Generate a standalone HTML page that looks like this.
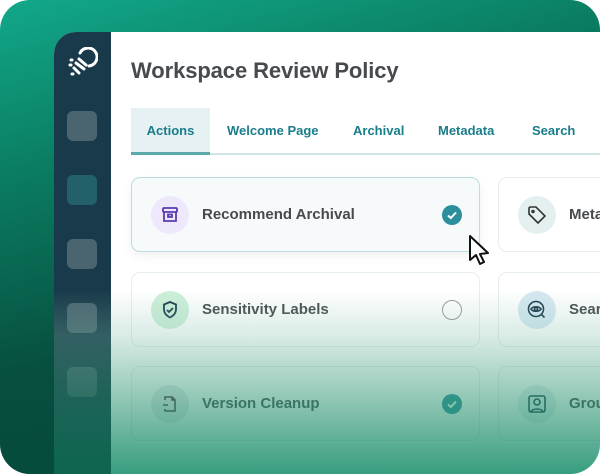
<!DOCTYPE html>
<html><head><style>
*{margin:0;padding:0;box-sizing:border-box}
body{width:600px;height:474px;overflow:hidden;background:#fff;font-family:"Liberation Sans",sans-serif}
.outer{position:absolute;left:0;top:0;width:600px;height:474px;border-radius:30px;overflow:hidden;background:linear-gradient(165deg,#12a88a 0%,#0a7a5e 30%,#075040 60%,#064a3a 100%)}
.panel{position:absolute;left:54px;top:32px;width:560px;height:460px;border-top-left-radius:22px;overflow:hidden;background:#fff}
.side{position:absolute;left:0;top:0;width:57px;height:100%;background:#193a4b}
.sq{position:absolute;left:13px;width:30px;height:30px;border-radius:6px;background:#4a6470}
.content{position:absolute;left:57px;top:0;right:0;bottom:0;background:#fff}
h1{position:absolute;left:20px;top:26px;font-size:22px;font-weight:bold;color:#474a4e;letter-spacing:-.1px}
.tabs{position:absolute;left:20px;top:76px;width:500px;height:47px;border-bottom:2px solid #cfe6e8}
.tab{position:absolute;top:0;height:47px;line-height:46px;font-size:13px;font-weight:bold;color:#1a7d8a}
.tab.act{background:#e6f1f3;border-bottom:3px solid #5aabaa}
.card{position:absolute;height:75px;border:1px solid #e6eeee;border-radius:9px;background:#fff}
.card.sel{background:#f7fafb;border-color:#b9dde2;box-shadow:0 4px 10px rgba(0,0,0,.06)}
.ic{position:absolute;left:19px;top:18px;width:38px;height:38px;border-radius:50%;display:flex;align-items:center;justify-content:center}
.lbl{position:absolute;left:70px;top:28px;font-size:15px;font-weight:bold;color:#474a4e}
.chk{position:absolute;left:310px;top:27px;width:20px;height:20px;border-radius:50%}
.ov{position:absolute;left:54px;top:290px;width:546px;height:184px;background:linear-gradient(180deg,rgba(255,255,255,0) 0%,rgba(130,190,170,.3) 25%,rgba(50,150,118,.55) 60%,rgba(20,140,105,.85) 100%)}
.ovl{position:absolute;left:0;top:300px;width:111px;height:174px;background:linear-gradient(180deg,rgba(6,74,58,0),rgba(6,74,58,.5))}
</style></head><body>
<div class="outer">
<div class="panel">
 <div class="side">
  <svg style="position:absolute;left:12px;top:15px" width="32" height="32" viewBox="0 0 32 32" fill="none" stroke="#fff" stroke-width="3" stroke-linecap="round"><path d="M14 6a9 9 0 1 1 9 13"/><path d="M13 12l7 6M10 16l8 6M8 21l5 5M5 13h1M4 18h1M6 27h1"/></svg>
  <div class="sq" style="top:79px"></div>
  <div class="sq" style="top:143px;background:#24606a"></div>
  <div class="sq" style="top:207px"></div>
  <div class="sq" style="top:271px"></div>
  <div class="sq" style="top:335px"></div>
 </div>
 <div class="content">
  <h1>Workspace Review Policy</h1>
  <div class="tabs">
   <div class="tab act" style="left:0;width:79px;text-align:center">Actions</div>
   <div class="tab" style="left:96px">Welcome Page</div>
   <div class="tab" style="left:222px">Archival</div>
   <div class="tab" style="left:307px">Metadata</div>
   <div class="tab" style="left:401px">Search</div>
  </div>
  <div class="card sel" style="left:20px;top:145px;width:349px">
   <div class="ic" style="background:#ede8fb"><svg width="20" height="20" viewBox="0 0 20 20" fill="none" stroke="#5b3bb0" stroke-width="1.8"><rect x="3" y="3" width="14" height="4" rx="1"/><path d="M4 7v9h12V7"/><rect x="8" y="9.5" width="4" height="2.5"/></svg></div>
   <div class="lbl">Recommend Archival</div>
   <div class="chk" style="background:#2d8f9b"><svg width="20" height="20"><path d="M6 10.5l2.8 2.5L14 7.5" stroke="#fff" stroke-width="2" fill="none"/></svg></div>
  </div>
  <div class="card" style="left:387px;top:145px;width:200px">
   <div class="ic" style="background:#e4eff0"><svg width="22" height="22" viewBox="0 0 22 22" fill="none" stroke="#333" stroke-width="1.6"><path d="M3 4v6l9 9 7-7-9-9H4z"/><circle cx="7" cy="7.5" r="1"/></svg></div>
   <div class="lbl">Metadata</div>
  </div>
  <div class="card" style="left:20px;top:240px;width:349px">
   <div class="ic" style="background:#cdefd9"><svg width="20" height="20" viewBox="0 0 20 20" fill="none" stroke="#1a3a4b" stroke-width="1.8"><path d="M10 2l6 2.5v5c0 4-3 6.5-6 8-3-1.5-6-4-6-8v-5z"/><path d="M7 10l2 2 4-4"/></svg></div>
   <div class="lbl">Sensitivity Labels</div>
   <div class="chk" style="border:1.5px solid #9a9a9a"></div>
  </div>
  <div class="card" style="left:387px;top:240px;width:200px">
   <div class="ic" style="background:#d6e8f2"><svg width="22" height="22" viewBox="0 0 22 22" fill="none" stroke="#1a3a4b" stroke-width="1.6"><circle cx="10" cy="10" r="7.5"/><path d="M5 10c2-3 8-3 10 0-2 3-8 3-10 0z"/><circle cx="10" cy="10" r="1.5"/><path d="M15.5 15.5l3 3"/></svg></div>
   <div class="lbl">Search</div>
  </div>
  <div class="card" style="left:20px;top:334px;width:349px">
   <div class="ic" style="background:#e8eaec"><svg width="20" height="20" viewBox="0 0 20 20" fill="none" stroke="#5a3040" stroke-width="1.6"><path d="M5 6V3h7l3 3v11H5v-2M12 3v3h3M3 11h5"/></svg></div>
   <div class="lbl">Version Cleanup</div>
   <div class="chk" style="background:#2d8f9b"><svg width="20" height="20"><path d="M6 10.5l2.8 2.5L14 7.5" stroke="#fff" stroke-width="2" fill="none"/></svg></div>
  </div>
  <div class="card" style="left:387px;top:334px;width:200px">
   <div class="ic" style="background:#e4eff0"><svg width="22" height="22" viewBox="0 0 22 22" fill="none" stroke="#1a3a4b" stroke-width="1.6"><rect x="3" y="3" width="16" height="16" rx="2"/><circle cx="11" cy="9" r="3"/><path d="M5 19c1-4 11-4 12 0"/></svg></div>
   <div class="lbl">Groups</div>
  </div>
 </div>
</div>
<svg style="position:absolute;left:468px;top:234px" width="26" height="34" viewBox="0 0 26 34"><path d="M2 2v24l6-5 4 9 4-2-4-8 8-1z" fill="#fff" stroke="#111" stroke-width="2" stroke-linejoin="round"/></svg>
<div class="ov"></div>
<div class="ovl"></div>
</div>
</body></html>
